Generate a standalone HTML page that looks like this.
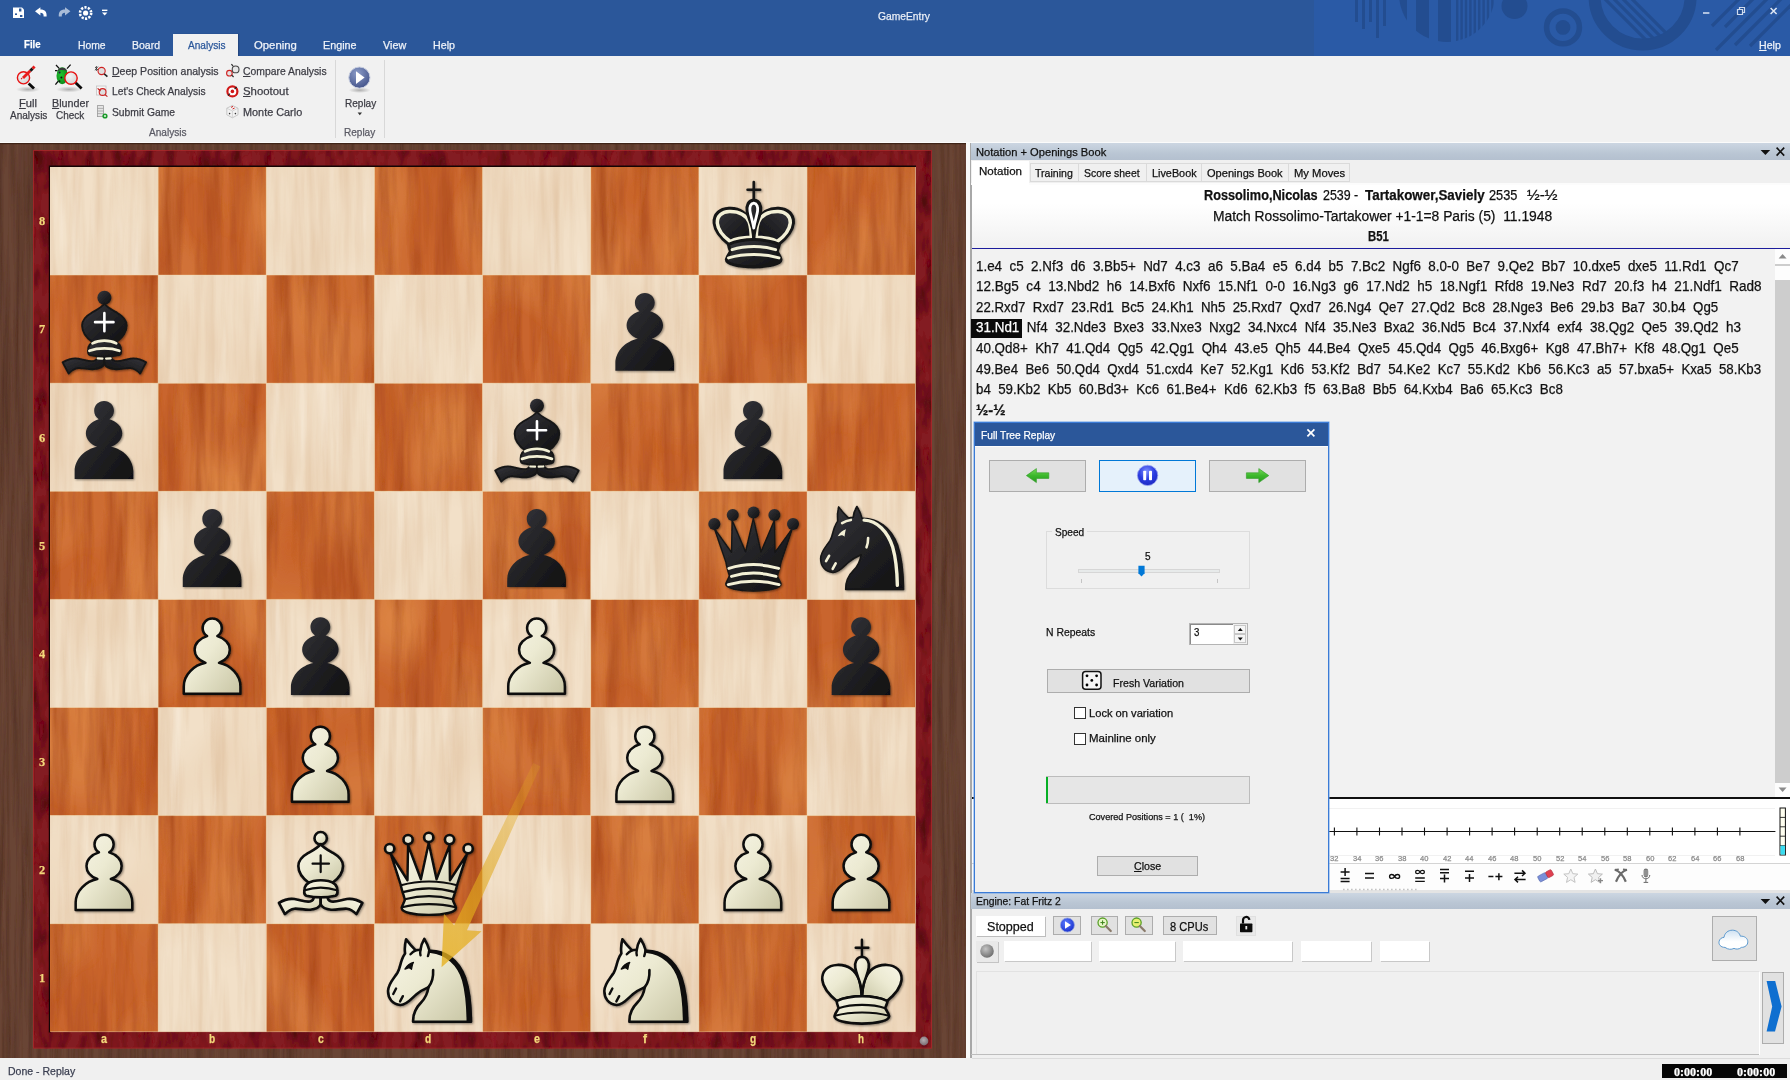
<!DOCTYPE html>
<html><head><meta charset="utf-8"><title>GameEntry</title>
<style>
html,body{margin:0;padding:0;}
body{width:1790px;height:1080px;overflow:hidden;position:relative;background:#f0f0f0;font-family:"Liberation Sans",sans-serif;font-size:11px;color:#000;}
div,span,svg{position:absolute;}
.t{white-space:pre;transform-origin:0 50%;-webkit-text-stroke:.25px currentColor;}
u{text-decoration:underline;text-underline-offset:1px;}

</style></head>
<body>
<svg width="0" height="0" style="left:0;top:0">
<defs>
<linearGradient id="iv" x1="0" y1="0" x2="1" y2="1">
<stop offset="0" stop-color="#f8f6e8"/><stop offset="0.45" stop-color="#ecead2"/><stop offset="1" stop-color="#c8c5a4"/>
</linearGradient>
<linearGradient id="bk" x1="0" y1="0" x2="1" y2="1">
<stop offset="0" stop-color="#38383d"/><stop offset="0.55" stop-color="#202023"/><stop offset="1" stop-color="#101011"/>
</linearGradient>
<filter id="psh" x="-10%" y="-10%" width="125%" height="125%">
<feGaussianBlur in="SourceAlpha" stdDeviation="0.9"/><feOffset dx="1.2" dy="1.2"/>
<feComponentTransfer><feFuncA type="linear" slope="0.45"/></feComponentTransfer>
<feMerge><feMergeNode/><feMergeNode in="SourceGraphic"/></feMerge>
</filter>
<filter id="wdark" x="0" y="0" width="100%" height="100%">
<feTurbulence type="fractalNoise" baseFrequency="0.07 0.006" numOctaves="4" seed="7" result="n"/>
<feColorMatrix in="n" type="matrix" values="0 0 0 0 0  0 0 0 0 0  0 0 0 0 0  1.5 0 0 0 -0.56" result="a"/>
<feFlood flood-color="#a03e16"/><feComposite in2="a" operator="in" result="dk"/>
<feColorMatrix in="n" type="matrix" values="0 0 0 0 0  0 0 0 0 0  0 0 0 0 0  0 -1.3 0 0 0.5" result="a2"/>
<feFlood flood-color="#e08848"/><feComposite in2="a2" operator="in" result="lt"/>
<feTurbulence type="fractalNoise" baseFrequency="0.014 0.008" numOctaves="2" seed="21" result="m"/>
<feColorMatrix in="m" type="matrix" values="0 0 0 0 0  0 0 0 0 0  0 0 0 0 0  1.6 0 0 0 -0.62" result="b"/>
<feFlood flood-color="#e4904c"/><feComposite in2="b" operator="in" result="bl"/>
<feMerge><feMergeNode in="SourceGraphic"/><feMergeNode in="bl"/><feMergeNode in="dk"/><feMergeNode in="lt"/></feMerge>
<feComposite in2="SourceGraphic" operator="in"/>
</filter>
<filter id="wlight" x="0" y="0" width="100%" height="100%">
<feTurbulence type="fractalNoise" baseFrequency="0.09 0.006" numOctaves="4" seed="3" result="n"/>
<feColorMatrix in="n" type="matrix" values="0 0 0 0 0  0 0 0 0 0  0 0 0 0 0  1.3 0 0 0 -0.5" result="a"/>
<feFlood flood-color="#dfc09e"/><feComposite in2="a" operator="in" result="dk"/>
<feColorMatrix in="n" type="matrix" values="0 0 0 0 0  0 0 0 0 0  0 0 0 0 0  0 -1.3 0 0 0.5" result="a2"/>
<feFlood flood-color="#faf0e2"/><feComposite in2="a2" operator="in" result="lt"/>
<feTurbulence type="fractalNoise" baseFrequency="0.012 0.009" numOctaves="2" seed="9" result="m"/>
<feColorMatrix in="m" type="matrix" values="0 0 0 0 0  0 0 0 0 0  0 0 0 0 0  1.2 0 0 0 -0.5" result="b"/>
<feFlood flood-color="#e6c8a6"/><feComposite in2="b" operator="in" result="bl"/>
<feMerge><feMergeNode in="SourceGraphic"/><feMergeNode in="bl"/><feMergeNode in="dk"/><feMergeNode in="lt"/></feMerge>
<feComposite in2="SourceGraphic" operator="in"/>
</filter>
<filter id="wbrown" x="0" y="0" width="100%" height="100%">
<feTurbulence type="fractalNoise" baseFrequency="0.2 0.006" numOctaves="4" seed="11" result="n"/>
<feColorMatrix in="n" type="matrix" values="0 0 0 0 0  0 0 0 0 0  0 0 0 0 0  1.4 0 0 0 -0.5" result="a"/>
<feFlood flood-color="#4a2a20"/><feComposite in2="a" operator="in" result="dk"/>
<feColorMatrix in="n" type="matrix" values="0 0 0 0 0  0 0 0 0 0  0 0 0 0 0  0 -1.4 0 0 0.45" result="a2"/>
<feFlood flood-color="#7c5446"/><feComposite in2="a2" operator="in" result="lt"/>
<feMerge><feMergeNode in="SourceGraphic"/><feMergeNode in="dk"/><feMergeNode in="lt"/></feMerge>
</filter>
<filter id="wred" x="0" y="0" width="100%" height="100%">
<feTurbulence type="fractalNoise" baseFrequency="0.09 0.03" numOctaves="3" seed="5" result="n"/>
<feColorMatrix in="n" type="matrix" values="0 0 0 0 0  0 0 0 0 0  0 0 0 0 0  2 0 0 0 -0.8" result="a"/>
<feFlood flood-color="#4c0a12"/><feComposite in2="a" operator="in" result="dk"/>
<feColorMatrix in="n" type="matrix" values="0 0 0 0 0  0 0 0 0 0  0 0 0 0 0  0 -1.6 0 0 0.5" result="a2"/>
<feFlood flood-color="#a02830"/><feComposite in2="a2" operator="in" result="lt"/>
<feMerge><feMergeNode in="SourceGraphic"/><feMergeNode in="dk"/><feMergeNode in="lt"/></feMerge>
<feComposite in2="SourceGraphic" operator="in"/>
</filter>
</defs>
</svg>

<div style="left:0px;top:0px;width:1790px;height:56px;background:#2b579a;"></div>
<div style="left:1314px;top:0px;width:476px;height:56px;background:#2a5aa6;"></div>
<svg width="476" height="56" viewBox="1314 0 476 56" style="left:1314px;top:0"><rect x="1355" y="0" width="3" height="22" fill="#234d90"/><rect x="1362" y="0" width="3" height="29" fill="#234d90"/><rect x="1369" y="0" width="3" height="22" fill="#234d90"/><rect x="1376" y="0" width="3" height="38" fill="#234d90"/><rect x="1383" y="0" width="3" height="26" fill="#234d90"/><clipPath id="hc"><circle cx="1447" cy="-6" r="48"/></clipPath><g clip-path="url(#hc)" fill="#234d90"><rect x="1399" y="0" width="8" height="60"/><rect x="1416" y="0" width="13" height="60"/><rect x="1438" y="0" width="13" height="60"/><rect x="1456" y="0" width="2.4" height="60"/><rect x="1460.4" y="0" width="2.4" height="60"/><rect x="1464.8000000000002" y="0" width="2.4" height="60"/><rect x="1469.2000000000003" y="0" width="2.4" height="60"/><rect x="1473.6000000000004" y="0" width="2.4" height="60"/><rect x="1478.0000000000005" y="0" width="2.4" height="60"/><rect x="1482.4000000000005" y="0" width="2.4" height="60"/><rect x="1486.8000000000006" y="0" width="2.4" height="60"/><rect x="1491.2000000000007" y="0" width="2.4" height="60"/><rect x="1495.6000000000008" y="0" width="2.4" height="60"/></g><circle cx="1514.5" cy="6" r="13" fill="#234d90"/><circle cx="1563" cy="27.4" r="16.4" fill="none" stroke="#234d90" stroke-width="5.6"/><circle cx="1563" cy="27.4" r="7.4" fill="#234d90"/><circle cx="1642.6" cy="-3.4" r="48" fill="none" stroke="#234d90" stroke-width="12"/><clipPath id="bc"><circle cx="1642.6" cy="-3.4" r="43"/></clipPath><g clip-path="url(#bc)" stroke="#234d90" stroke-width="3.2"><line x1="1586" y1="-20" x2="1656" y2="50"/><line x1="1595" y1="-20" x2="1665" y2="50"/><line x1="1604" y1="-20" x2="1674" y2="50"/><line x1="1613" y1="-20" x2="1683" y2="50"/></g><g stroke="#234d90" stroke-width="3.2"><line x1="1712" y1="26" x2="1740" y2="-2"/><line x1="1716" y1="50" x2="1770" y2="-4"/><line x1="1725" y1="27" x2="1754" y2="-2"/><line x1="1735" y1="45" x2="1784" y2="-4"/><line x1="1750" y1="46" x2="1796" y2="0"/></g></svg>
<svg width="120" height="28" viewBox="0 0 120 28" style="left:0;top:0"><path d="M13,7.5 h9 l2,2 v8.5 h-11 z" fill="#fff"/><rect x="19" y="8.5" width="2.4" height="3" fill="#2b579a"/><rect x="15" y="13.4" width="2" height="1.6" fill="#2b579a"/><rect x="20" y="15" width="2.4" height="2" fill="#2b579a"/><path d="M35,11.2 l5.4,-4 v2.4 c4.6,0 6.6,2.6 6.2,7 h-3 c0.2,-2.6 -0.8,-3.8 -3.2,-3.8 v2.6 z" fill="#fff"/><path d="M70.4,11.2 l-5.4,-4 v2.4 c-4.6,0 -6.6,2.6 -6.2,7 h3 c-0.2,-2.6 0.8,-3.8 3.2,-3.8 v2.6 z" fill="#a9bcd8"/><circle cx="85.6" cy="13" r="5.6" fill="none" stroke="#fff" stroke-width="2.6" stroke-dasharray="2.2 1.3"/><circle cx="85.6" cy="13" r="2.6" fill="#fff"/><rect x="102" y="9.6" width="5.4" height="1.4" fill="#fff"/><path d="M102,12.6 h5.4 l-2.7,3 z" fill="#fff"/></svg>
<span class="t" style="left:877.50px;top:10.53px;font-size:11px;line-height:11px;font-weight:400;color:#e9eef6;transform:scaleX(0.9346);">GameEntry</span>
<svg width="100" height="24" viewBox="1695 0 100 24" style="left:1695px;top:0"><rect x="1703" y="12.2" width="6.4" height="1.6" fill="#cfdbee"/><path d="M1737.5,9.5 h5 v5 h-5 z M1739.5,9.5 v-2 h5 v5 h-2" fill="none" stroke="#cfdbee" stroke-width="1.2"/><path d="M1770.6,8 l6,6 M1776.6,8 l-6,6" stroke="#dfe7f3" stroke-width="1.5" fill="none"/></svg>
<div style="left:173px;top:34px;width:65px;height:23px;background:#f1f1f1;box-shadow:1px 0 1px rgba(20,40,80,.35);"></div>
<span class="t" style="left:23.60px;top:38.93px;font-size:11px;line-height:11px;font-weight:700;color:#fff;transform:scaleX(0.8758);">File</span>
<span class="t" style="left:78.40px;top:39.53px;font-size:11px;line-height:11px;font-weight:400;color:#eef2f8;transform:scaleX(0.9406);">Home</span>
<span class="t" style="left:132.40px;top:39.53px;font-size:11px;line-height:11px;font-weight:400;color:#eef2f8;transform:scaleX(0.9537);">Board</span>
<span class="t" style="left:187.80px;top:39.53px;font-size:11px;line-height:11px;font-weight:400;color:#2b579a;transform:scaleX(0.9178);">Analysis</span>
<span class="t" style="left:253.60px;top:39.53px;font-size:11px;line-height:11px;font-weight:400;color:#eef2f8;transform:scaleX(1.0290);">Opening</span>
<span class="t" style="left:323.40px;top:39.53px;font-size:11px;line-height:11px;font-weight:400;color:#eef2f8;transform:scaleX(0.9806);">Engine</span>
<span class="t" style="left:383.40px;top:39.53px;font-size:11px;line-height:11px;font-weight:400;color:#eef2f8;transform:scaleX(0.9807);">View</span>
<span class="t" style="left:432.60px;top:39.53px;font-size:11px;line-height:11px;font-weight:400;color:#eef2f8;transform:scaleX(0.9724);">Help</span>
<span class="t" style="left:1758.60px;top:39.53px;font-size:11px;line-height:11px;font-weight:400;color:#eef2f8;transform:scaleX(0.9629);"><u>H</u>elp</span>
<div style="left:0px;top:56px;width:1790px;height:85.5px;background:#f1f1f1;"></div>
<div style="left:0px;top:141.5px;width:1790px;height:1.5px;background:#fbfbfb;"></div>
<div style="left:335px;top:60px;width:1px;height:78px;background:#d8d8d8;"></div>
<div style="left:384px;top:60px;width:1px;height:78px;background:#d8d8d8;"></div>
<span class="t" style="left:19.40px;top:97.53px;font-size:11px;line-height:11px;font-weight:400;color:#3c3c44;transform:scaleX(1.0141);"><u>F</u>ull</span>
<span class="t" style="left:9.60px;top:109.53px;font-size:11px;line-height:11px;font-weight:400;color:#3c3c44;transform:scaleX(0.9129);">Analysis</span>
<span class="t" style="left:51.60px;top:97.53px;font-size:11px;line-height:11px;font-weight:400;color:#3c3c44;transform:scaleX(0.9757);"><u>B</u>lunder</span>
<span class="t" style="left:56.40px;top:109.53px;font-size:11px;line-height:11px;font-weight:400;color:#3c3c44;transform:scaleX(0.9042);">Check</span>
<span class="t" style="left:112.00px;top:65.93px;font-size:11px;line-height:11px;font-weight:400;color:#3c3c44;transform:scaleX(0.9578);"><u>D</u>eep Position analysis</span>
<span class="t" style="left:112.00px;top:86.33px;font-size:11px;line-height:11px;font-weight:400;color:#3c3c44;transform:scaleX(0.9309);">Let's Check Analysis</span>
<span class="t" style="left:112.00px;top:106.93px;font-size:11px;line-height:11px;font-weight:400;color:#3c3c44;transform:scaleX(0.9368);">Submit Game</span>
<span class="t" style="left:243.40px;top:65.93px;font-size:11px;line-height:11px;font-weight:400;color:#3c3c44;transform:scaleX(0.9428);"><u>C</u>ompare Analysis</span>
<span class="t" style="left:243.40px;top:86.33px;font-size:11px;line-height:11px;font-weight:400;color:#3c3c44;transform:scaleX(1.0353);"><u>S</u>hootout</span>
<span class="t" style="left:243.40px;top:106.93px;font-size:11px;line-height:11px;font-weight:400;color:#3c3c44;transform:scaleX(0.9880);">Monte Carlo</span>
<span class="t" style="left:149.40px;top:126.53px;font-size:11px;line-height:11px;font-weight:400;color:#5a5a64;transform:scaleX(0.9178);">Analysis</span>
<span class="t" style="left:345.40px;top:97.53px;font-size:11px;line-height:11px;font-weight:400;color:#3c3c44;transform:scaleX(0.9109);">Replay</span>
<span class="t" style="left:344.40px;top:126.53px;font-size:11px;line-height:11px;font-weight:400;color:#5a5a64;transform:scaleX(0.9109);">Replay</span>
<svg width="400" height="86" viewBox="0 56 400 86" style="left:0;top:56px"><defs><radialGradient id="lens" cx=".4" cy=".35" r=".8"><stop offset="0" stop-color="#f4f4f4"/><stop offset="1" stop-color="#cfcfcf"/></radialGradient><radialGradient id="shd" cx=".5" cy=".5" r=".5"><stop offset="0" stop-color="#000" stop-opacity=".28"/><stop offset="1" stop-color="#000" stop-opacity="0"/></radialGradient><radialGradient id="bugg" cx=".4" cy=".45" r=".7"><stop offset="0" stop-color="#1ec82e"/><stop offset="1" stop-color="#0c7a18"/></radialGradient></defs><ellipse cx="28" cy="89.4" rx="12" ry="3" fill="url(#shd)"/><line x1="28.6" y1="83.4" x2="34" y2="88.6" stroke="#0a0a0a" stroke-width="2.8" stroke-linecap="butt"/><circle cx="23.5" cy="77.8" r="6.1" fill="url(#lens)" stroke="#e81010" stroke-width="1.4"/><circle cx="21.6" cy="78.6" r=".8" fill="#e02020"/><g transform="rotate(-45 28.6 72.4)"><rect x="20.6" y="71" width="10.4" height="2.9" fill="#e81c1c"/><rect x="31" y="71" width="3.2" height="2.9" fill="#151515"/><rect x="34.2" y="71" width="2.8" height="2.9" fill="#e81c1c"/></g><ellipse cx="69" cy="89.4" rx="13" ry="3" fill="url(#shd)"/><path d="M56,65 l3.4,3.6 M70.6,64.6 l-3.6,4 M55,70.6 h2.4 M55.4,84.6 l3,-3.6" stroke="#111" stroke-width="1.3" fill="none"/><ellipse cx="62.2" cy="75.8" rx="5.7" ry="8.5" fill="url(#bugg)"/><path d="M57.2,71.4 a5.4,5.4 0 0 1 10,-0.4 c-3,-1.4 -7,-1.400 -10,0.400 z" fill="#3a3a3a"/><circle cx="59.6" cy="72.6" r="1" fill="#30104a"/><circle cx="61.4" cy="77.4" r="1" fill="#111"/><circle cx="59.4" cy="81.2" r="1" fill="#111"/><line x1="75.6" y1="82.800" x2="81.6" y2="88.600" stroke="#0a0a0a" stroke-width="2.800"/><circle cx="71" cy="78.100" r="6.200" fill="url(#lens)" stroke="#e81010" stroke-width="1.400"/><circle cx="101.6" cy="71" r="3.6" fill="#dedede" stroke="#d02020" stroke-width="1.1"/><line x1="104.2" y1="73.8" x2="107.4" y2="76.6" stroke="#222" stroke-width="1.6"/><path d="M95,67 l3,3 M98,66.6 l-3,3.6 M96.4,66 v5" stroke="#333" stroke-width=".8"/><rect x="96.4" y="86" width="9.6" height="9" fill="#f6f6f6" stroke="#c4c4c4" stroke-width=".8"/><circle cx="102.6" cy="92" r="3.4" fill="#dedede" stroke="#d02020" stroke-width="1.1"/><path d="M97.6,88.4 l3,2.6 M105,94.6 l2.4,2" stroke="#c02020" stroke-width="1.2"/><rect x="97.4" y="105.6" width="6" height="11" fill="#e4e4e4" stroke="#9a9a9a" stroke-width=".8"/><path d="M97.4,108.4 h6 M97.4,111 h6 M97.4,113.6 h6" stroke="#9a9a9a" stroke-width=".7"/><circle cx="105" cy="116" r="2.6" fill="#1a9a2a"/><circle cx="105" cy="116" r=".9" fill="#fff"/><circle cx="229.4" cy="73.2" r="2.8" fill="#e2e2e2" stroke="#d02020" stroke-width="1.1"/><circle cx="235.6" cy="69.4" r="3.4" fill="#e6e6e6" stroke="#444" stroke-width="1.1"/><path d="M231.6,75 l2,2 M233,66 l-1.6,-1.8" stroke="#333" stroke-width="1.2"/><circle cx="232.4" cy="91.4" r="5" fill="#fff" stroke="#d01818" stroke-width="2.2"/><circle cx="232.4" cy="91.4" r="1.8" fill="#d01818"/><path d="M228,95.6 l2,-2 M236.6,87 l-2,2" stroke="#222" stroke-width="1.2"/><path d="M232.4,105.4 l5.6,2.8 v6.6 l-5.6,3 l-5.6,-3 v-6.6 z" fill="#f2f2f2" stroke="#bdbdbd" stroke-width=".8"/><path d="M226.8,108.2 l5.6,2.8 l5.6,-2.8 M232.4,111 v6.8" stroke="#c8c8c8" stroke-width=".7" fill="none"/><path d="M231,107.4 l2,-1 M232.6,109 l2,-1" stroke="#d02020" stroke-width="1"/><circle cx="229.6" cy="113.6" r=".8" fill="#333"/><circle cx="235.4" cy="113.6" r=".8" fill="#333"/><ellipse cx="359.6" cy="90.2" rx="11" ry="2.8" fill="url(#shd)"/><defs><radialGradient id="rp" cx=".4" cy=".3" r=".8"><stop offset="0" stop-color="#8c9cc8"/><stop offset="1" stop-color="#3c4c84"/></radialGradient></defs><circle cx="359.4" cy="77.6" r="10.6" fill="url(#rp)" stroke="#c9cfe0" stroke-width="1"/><path d="M356,71.2 l8.6,6.4 l-8.6,6.4 z" fill="#fff"/><path d="M357.6,112.6 h4.4 l-2.2,2.6 z" fill="#333"/></svg>
<svg width="966" height="915" style="left:0;top:143px"><rect width="966" height="915" fill="#694435" filter="url(#wbrown)"/><rect width="966" height="1.2" fill="#3f2418"/></svg>
<svg width="900" height="899" style="left:33px;top:150px"><rect width="899" height="898.6" fill="#831d24" filter="url(#wred)"/><rect x=".5" y=".5" width="898" height="897.6" fill="none" stroke="#b02c2c" stroke-width="1" opacity=".7"/><path d="M16.6,882.6 V16.2 H883" fill="none" stroke="#140404" stroke-width="1.6"/><path d="M18,881.6 H882.4 V17" fill="none" stroke="#f6deaa" stroke-width="1" opacity=".75"/></svg>
<svg width="865.2" height="864.8" viewBox="0 0 864 864" preserveAspectRatio="none" style="left:50.4px;top:167.2px"><rect width="864" height="864" fill="#f2e0c8" filter="url(#wlight)"/><path d="M108,0h108v108h-108zM324,0h108v108h-108zM540,0h108v108h-108zM756,0h108v108h-108zM0,108h108v108h-108zM216,108h108v108h-108zM432,108h108v108h-108zM648,108h108v108h-108zM108,216h108v108h-108zM324,216h108v108h-108zM540,216h108v108h-108zM756,216h108v108h-108zM0,324h108v108h-108zM216,324h108v108h-108zM432,324h108v108h-108zM648,324h108v108h-108zM108,432h108v108h-108zM324,432h108v108h-108zM540,432h108v108h-108zM756,432h108v108h-108zM0,540h108v108h-108zM216,540h108v108h-108zM432,540h108v108h-108zM648,540h108v108h-108zM108,648h108v108h-108zM324,648h108v108h-108zM540,648h108v108h-108zM756,648h108v108h-108zM0,756h108v108h-108zM216,756h108v108h-108zM432,756h108v108h-108zM648,756h108v108h-108z" fill="#c9652f" filter="url(#wdark)"/><path d="M108,0v864M0,108h864M216,0v864M0,216h864M324,0v864M0,324h864M432,0v864M0,432h864M540,0v864M0,540h864M648,0v864M0,648h864M756,0v864M0,756h864" stroke="#f3d9a8" stroke-width=".8" opacity=".55" fill="none"/></svg>
<span class="t" style="left:39.40px;top:214.35px;font-size:13px;line-height:13px;font-weight:700;color:#f3d77a;transform:scaleX(0.9538);font-family:'Liberation Serif',serif;">8</span>
<span class="t" style="left:39.40px;top:322.47px;font-size:13px;line-height:13px;font-weight:700;color:#f3d77a;transform:scaleX(0.9538);font-family:'Liberation Serif',serif;">7</span>
<span class="t" style="left:39.40px;top:430.59px;font-size:13px;line-height:13px;font-weight:700;color:#f3d77a;transform:scaleX(0.9538);font-family:'Liberation Serif',serif;">6</span>
<span class="t" style="left:39.40px;top:538.71px;font-size:13px;line-height:13px;font-weight:700;color:#f3d77a;transform:scaleX(0.9538);font-family:'Liberation Serif',serif;">5</span>
<span class="t" style="left:39.40px;top:646.83px;font-size:13px;line-height:13px;font-weight:700;color:#f3d77a;transform:scaleX(0.9538);font-family:'Liberation Serif',serif;">4</span>
<span class="t" style="left:39.40px;top:754.95px;font-size:13px;line-height:13px;font-weight:700;color:#f3d77a;transform:scaleX(0.9538);font-family:'Liberation Serif',serif;">3</span>
<span class="t" style="left:39.40px;top:863.07px;font-size:13px;line-height:13px;font-weight:700;color:#f3d77a;transform:scaleX(0.9538);font-family:'Liberation Serif',serif;">2</span>
<span class="t" style="left:39.40px;top:971.19px;font-size:13px;line-height:13px;font-weight:700;color:#f3d77a;transform:scaleX(0.9538);font-family:'Liberation Serif',serif;">1</span>
<span class="t" style="left:101.20px;top:1033.29px;font-size:12.5px;line-height:12.5px;font-weight:700;color:#f3d77a;transform:scaleX(0.8629);">a</span>
<span class="t" style="left:209.20px;top:1033.29px;font-size:12.5px;line-height:12.5px;font-weight:700;color:#f3d77a;transform:scaleX(0.8115);">b</span>
<span class="t" style="left:317.50px;top:1033.29px;font-size:12.5px;line-height:12.5px;font-weight:700;color:#f3d77a;transform:scaleX(0.8342);">c</span>
<span class="t" style="left:425.40px;top:1033.29px;font-size:12.5px;line-height:12.5px;font-weight:700;color:#f3d77a;transform:scaleX(0.8115);">d</span>
<span class="t" style="left:533.60px;top:1033.29px;font-size:12.5px;line-height:12.5px;font-weight:700;color:#f3d77a;transform:scaleX(0.8629);">e</span>
<span class="t" style="left:642.70px;top:1033.29px;font-size:12.5px;line-height:12.5px;font-weight:700;color:#f3d77a;transform:scaleX(0.9588);">f</span>
<span class="t" style="left:749.70px;top:1033.29px;font-size:12.5px;line-height:12.5px;font-weight:700;color:#f3d77a;transform:scaleX(0.8115);">g</span>
<span class="t" style="left:857.90px;top:1033.29px;font-size:12.5px;line-height:12.5px;font-weight:700;color:#f3d77a;transform:scaleX(0.7853);">h</span>
<svg width="12" height="12" style="left:918px;top:1035px"><defs><radialGradient id="dg" cx=".45" cy=".4" r=".6"><stop offset="0" stop-color="#b4acb0"/><stop offset="1" stop-color="#7a6c72"/></radialGradient></defs><circle cx="6" cy="6" r="4.4" fill="url(#dg)"/></svg>
<svg width="865.2" height="864.8" viewBox="0 0 864 864" preserveAspectRatio="none" style="left:50.4px;top:167.2px"><g transform="translate(648 0)" filter="url(#psh)"><path d="M54.6,72.4 C44,72.6 36,74 30,77.4 C22,71 16,64 15.2,56 C14.6,47 21,41.6 30,41.2 C40,40.8 48,46 52,56 C53.6,61 54.4,67 54.6,72.4 Z" fill="url(#bk)" stroke="#141414" stroke-width="3" stroke-linejoin="round"/><path d="M52,70.2 C44,70.4 36.6,71.6 31.4,74.4 C24,69 19,62.6 18.4,56 C18,49 23,44.6 30.4,44.4 C39,44.2 46.8,47.4 50.2,55 C51.6,59 52.2,65 52.3,70.2 Z" fill="none" stroke="#f3f0d6" stroke-width="3.5" stroke-linejoin="round"/><g transform="translate(109.6 0) scale(-1 1)"><path d="M54.6,72.4 C44,72.6 36,74 30,77.4 C22,71 16,64 15.2,56 C14.6,47 21,41.6 30,41.2 C40,40.8 48,46 52,56 C53.6,61 54.4,67 54.6,72.4 Z" fill="url(#bk)" stroke="#141414" stroke-width="3" stroke-linejoin="round"/><path d="M52,70.2 C44,70.4 36.6,71.6 31.4,74.4 C24,69 19,62.6 18.4,56 C18,49 23,44.6 30.4,44.4 C39,44.2 46.8,47.4 50.2,55 C51.6,59 52.2,65 52.3,70.2 Z" fill="none" stroke="#f3f0d6" stroke-width="3.5" stroke-linejoin="round"/></g><path d="M54.8,33 C49.4,33.4 47.4,38.4 48.2,44 C49,50 52,55 53.4,61 C54,64.6 54.6,68.6 54.8,72.4 C55,68.6 55.6,64.6 56.4,61 C57.8,55 60.8,50 61.6,44 C62.4,38.4 60.2,33.4 54.8,33 Z" fill="url(#bk)" stroke="#141414" stroke-width="3" stroke-linejoin="round"/><path d="M54.8,36 C51.6,36.4 50.4,40 51,44 C51.6,48.6 53.7,53.6 54.8,61 C55.9,53.6 58,48.6 58.6,44 C59.2,40 58,36.4 54.8,36 Z" fill="none" stroke="#fff" stroke-width="2.8" stroke-linejoin="round"/><path d="M29.6,77.2 C44,71 66,71 80.4,77.2 C80,80 79,82 78,84.4 C79.6,87 81.4,89.4 82,92.4 C82.2,97 70,99.8 54.8,99.8 C39.6,99.8 27.2,97 27.4,92.4 C28,89.4 30,87 31.6,84.4 C30.6,82 29.8,80 29.6,77.2 Z" fill="url(#bk)" stroke="#141414" stroke-width="3" stroke-linejoin="round"/><path d="M33.2,82.6 C46,78.4 64,78.4 76.6,82.6 M29.6,90.8 C45,86.4 65,86.4 80,90.8" fill="none" stroke="#f3f0d6" stroke-width="3" stroke-linecap="round"/><path d="M54.8,15 L54.8,32 M48.6,22.8 L61.2,22.8" fill="none" stroke="#141414" stroke-width="2.6" stroke-linecap="round"/></g><g transform="translate(0 108)" filter="url(#psh)"><path d="M12.6,87.2 C18,84 23,82.6 28,83.4 C34,84.4 39,86.6 43.6,85.8 C46.6,85 47.4,83 47.4,81 L54.3,81.4 L54.3,88.6 C53,91.6 49,93.6 44,94 C38,94.4 33,92.6 28,93 C24.4,93.4 21.6,95.4 18.6,98.4 Z" fill="url(#bk)" stroke="#161616" stroke-width="1.8" stroke-linejoin="round"/><g transform="translate(108.6 0) scale(-1 1)"><path d="M12.6,87.2 C18,84 23,82.6 28,83.4 C34,84.4 39,86.6 43.6,85.8 C46.6,85 47.4,83 47.4,81 L54.3,81.4 L54.3,88.6 C53,91.6 49,93.6 44,94 C38,94.4 33,92.6 28,93 C24.4,93.4 21.6,95.4 18.6,98.4 Z" fill="url(#bk)" stroke="#161616" stroke-width="1.8" stroke-linejoin="round"/></g><circle cx="54.3" cy="22.6" r="7" fill="url(#bk)"/><path d="M54.3,28.4 C52,32 47,34.6 41.6,37.6 C36,40.8 32,45 32,50.4 C32,56.4 35.6,62.4 43,67.6 L65.6,67.6 C73,62.4 76.6,56.4 76.6,50.4 C76.6,45 72.6,40.8 67,37.6 C61.6,34.6 56.6,32 54.3,28.4 Z" fill="url(#bk)" stroke="#161616" stroke-width="1.8" stroke-linejoin="round"/><path d="M38,75 C38,70 42,66.6 47,65.4 C52,64.4 57,64.4 62,65.4 C67,66.6 71,70 71,75 C71.4,77.6 70.6,79.4 69,80 C60,82 49,82 40,80 C38.4,79.4 37.6,77.6 38,75 Z" fill="url(#bk)" stroke="#161616" stroke-width="1.8" stroke-linejoin="round"/><path d="M42.4,68.2 C49,64.6 59.6,64.6 66.2,68.2" fill="none" stroke="#f3f0d6" stroke-width="2.6" stroke-linecap="round"/><path d="M39.4,75.6 C48,72.4 60.6,72.4 69.2,75.6" fill="none" stroke="#f3f0d6" stroke-width="2.8" stroke-linecap="round"/><path d="M47.6,83.2 L52.4,83.4 M56,83.4 L60.6,83.2" fill="none" stroke="#f3f0d6" stroke-width="2.2" stroke-linecap="round"/><path d="M54.3,38 L54.3,56 M45,47 L63.4,47" fill="none" stroke="#fff" stroke-width="2.6" stroke-linecap="round"/></g><g transform="translate(540 108)" filter="url(#psh)"><path d="M54,17.8 C59.6,17.8 63.9,22.1 63.9,27.6 C63.9,31.2 62.1,34.2 59.3,36 C66.8,38.2 72.2,43.6 72.2,50 C72.2,56 67.6,61 61,63.6 C73,66 83.2,76 83.2,88 L83.2,95.6 L24.6,95.6 L24.6,88 C24.6,76 35,66 47,63.6 C40.4,61 35.8,56 35.8,50 C35.8,43.6 41.2,38.2 48.7,36 C45.9,34.2 44.1,31.2 44.1,27.6 C44.1,22.1 48.4,17.8 54,17.8 Z" fill="url(#bk)"/></g><g transform="translate(0 216)" filter="url(#psh)"><path d="M54,17.8 C59.6,17.8 63.9,22.1 63.9,27.6 C63.9,31.2 62.1,34.2 59.3,36 C66.8,38.2 72.2,43.6 72.2,50 C72.2,56 67.6,61 61,63.6 C73,66 83.2,76 83.2,88 L83.2,95.6 L24.6,95.6 L24.6,88 C24.6,76 35,66 47,63.6 C40.4,61 35.8,56 35.8,50 C35.8,43.6 41.2,38.2 48.7,36 C45.9,34.2 44.1,31.2 44.1,27.6 C44.1,22.1 48.4,17.8 54,17.8 Z" fill="url(#bk)"/></g><g transform="translate(432 216)" filter="url(#psh)"><path d="M12.6,87.2 C18,84 23,82.6 28,83.4 C34,84.4 39,86.6 43.6,85.8 C46.6,85 47.4,83 47.4,81 L54.3,81.4 L54.3,88.6 C53,91.6 49,93.6 44,94 C38,94.4 33,92.6 28,93 C24.4,93.4 21.6,95.4 18.6,98.4 Z" fill="url(#bk)" stroke="#161616" stroke-width="1.8" stroke-linejoin="round"/><g transform="translate(108.6 0) scale(-1 1)"><path d="M12.6,87.2 C18,84 23,82.6 28,83.4 C34,84.4 39,86.6 43.6,85.8 C46.6,85 47.4,83 47.4,81 L54.3,81.4 L54.3,88.6 C53,91.6 49,93.6 44,94 C38,94.4 33,92.6 28,93 C24.4,93.4 21.6,95.4 18.6,98.4 Z" fill="url(#bk)" stroke="#161616" stroke-width="1.8" stroke-linejoin="round"/></g><circle cx="54.3" cy="22.6" r="7" fill="url(#bk)"/><path d="M54.3,28.4 C52,32 47,34.6 41.6,37.6 C36,40.8 32,45 32,50.4 C32,56.4 35.6,62.4 43,67.6 L65.6,67.6 C73,62.4 76.6,56.4 76.6,50.4 C76.6,45 72.6,40.8 67,37.6 C61.6,34.6 56.6,32 54.3,28.4 Z" fill="url(#bk)" stroke="#161616" stroke-width="1.8" stroke-linejoin="round"/><path d="M38,75 C38,70 42,66.6 47,65.4 C52,64.4 57,64.4 62,65.4 C67,66.6 71,70 71,75 C71.4,77.6 70.6,79.4 69,80 C60,82 49,82 40,80 C38.4,79.4 37.6,77.6 38,75 Z" fill="url(#bk)" stroke="#161616" stroke-width="1.8" stroke-linejoin="round"/><path d="M42.4,68.2 C49,64.6 59.6,64.6 66.2,68.2" fill="none" stroke="#f3f0d6" stroke-width="2.6" stroke-linecap="round"/><path d="M39.4,75.6 C48,72.4 60.6,72.4 69.2,75.6" fill="none" stroke="#f3f0d6" stroke-width="2.8" stroke-linecap="round"/><path d="M47.6,83.2 L52.4,83.4 M56,83.4 L60.6,83.2" fill="none" stroke="#f3f0d6" stroke-width="2.2" stroke-linecap="round"/><path d="M54.3,38 L54.3,56 M45,47 L63.4,47" fill="none" stroke="#fff" stroke-width="2.6" stroke-linecap="round"/></g><g transform="translate(648 216)" filter="url(#psh)"><path d="M54,17.8 C59.6,17.8 63.9,22.1 63.9,27.6 C63.9,31.2 62.1,34.2 59.3,36 C66.8,38.2 72.2,43.6 72.2,50 C72.2,56 67.6,61 61,63.6 C73,66 83.2,76 83.2,88 L83.2,95.6 L24.6,95.6 L24.6,88 C24.6,76 35,66 47,63.6 C40.4,61 35.8,56 35.8,50 C35.8,43.6 41.2,38.2 48.7,36 C45.9,34.2 44.1,31.2 44.1,27.6 C44.1,22.1 48.4,17.8 54,17.8 Z" fill="url(#bk)"/></g><g transform="translate(108 324)" filter="url(#psh)"><path d="M54,17.8 C59.6,17.8 63.9,22.1 63.9,27.6 C63.9,31.2 62.1,34.2 59.3,36 C66.8,38.2 72.2,43.6 72.2,50 C72.2,56 67.6,61 61,63.6 C73,66 83.2,76 83.2,88 L83.2,95.6 L24.6,95.6 L24.6,88 C24.6,76 35,66 47,63.6 C40.4,61 35.8,56 35.8,50 C35.8,43.6 41.2,38.2 48.7,36 C45.9,34.2 44.1,31.2 44.1,27.6 C44.1,22.1 48.4,17.8 54,17.8 Z" fill="url(#bk)"/></g><g transform="translate(432 324)" filter="url(#psh)"><path d="M54,17.8 C59.6,17.8 63.9,22.1 63.9,27.6 C63.9,31.2 62.1,34.2 59.3,36 C66.8,38.2 72.2,43.6 72.2,50 C72.2,56 67.6,61 61,63.6 C73,66 83.2,76 83.2,88 L83.2,95.6 L24.6,95.6 L24.6,88 C24.6,76 35,66 47,63.6 C40.4,61 35.8,56 35.8,50 C35.8,43.6 41.2,38.2 48.7,36 C45.9,34.2 44.1,31.2 44.1,27.6 C44.1,22.1 48.4,17.8 54,17.8 Z" fill="url(#bk)"/></g><g transform="translate(648 324)" filter="url(#psh)"><path d="M27,71 L15.4,37 L32.6,61 L33.2,29 L46.6,60.4 L54.4,27 L62,60.4 L75.4,29 L76,61 L93.4,37 L82,71 C81.4,75 79.8,80 78.4,84.4 C79.4,87.4 81,89.4 82,92.6 C82,97 70,99.6 54.4,99.6 C38.6,99.6 26.6,97 26.8,92.6 C27.8,89.4 29.4,87.4 30.4,84.4 C29,80 27.6,75 27,71 Z" fill="url(#bk)" stroke="#161616" stroke-width="1.4" stroke-linejoin="round"/><circle cx="15.4" cy="32.6" r="6" fill="url(#bk)"/><circle cx="33.8" cy="23.6" r="6" fill="url(#bk)"/><circle cx="54.6" cy="21.2" r="6" fill="url(#bk)"/><circle cx="75.4" cy="23.6" r="6" fill="url(#bk)"/><circle cx="94" cy="32.6" r="6" fill="url(#bk)"/><path d="M30,77 C46,72 63,72 79.6,77 M32.6,85 C47,80.6 62,80.6 77,85 M29.4,93.2 C45,89 64,89 80,93.2" fill="none" stroke="#f3f0d6" stroke-width="3" stroke-linecap="round"/></g><g transform="translate(756 324)" filter="url(#psh)"><path d="M31.6,15.6 C34,19 38,23.5 41.2,26.6 C43,26.2 44.6,26 46,26 C46.4,22.4 47.8,18.6 49.8,15.2 C52,18.8 54,23 55,27 C70,26.6 84,36 90.5,54 C94.6,66 96.2,82 96.4,98 L38.6,98 C38.4,90 41.4,84 46.4,79 C50.4,75 53,70 54,63.4 C49.6,65.4 45.4,67.6 42,70.4 C37,74.6 32.6,81 26,81.2 C18,80.6 13.4,74.6 13.6,67 C13.8,60 19.2,55 23,49 C25.4,45 25.6,40.4 27.6,35.6 C28.4,33.4 29.4,31.4 30.6,29.8 C30,25.2 30.4,20.2 31.6,15.6 Z" fill="url(#bk)" stroke="#161616" stroke-width="1.6" stroke-linejoin="round"/><path d="M57,28.8 C70,29.4 80.6,40 85.6,56 C89,68 90,82 90.2,94" fill="none" stroke="#f3f0d6" stroke-width="3.4" stroke-linecap="round"/><path d="M35,31.8 C37.8,30 40.8,29 43.8,28.6" fill="none" stroke="#f3f0d6" stroke-width="2.6" stroke-linecap="round"/><path d="M61,46.6 C61,50 60.4,53.6 59.4,56" fill="none" stroke="#f3f0d6" stroke-width="2.6" stroke-linecap="round"/><path d="M30.6,45 C32.6,41.4 35.6,39 39,38 C38,40 38,42.6 37.4,45.4 C36.2,44 34.6,43.4 33,44.4 Z" fill="#f3f0d6"/><path d="M22,64.4 L19,69.8 M28.6,72 L25.6,77.6" fill="none" stroke="#f3f0d6" stroke-width="2.6" stroke-linecap="round"/></g><g transform="translate(108 432)" filter="url(#psh)"><path d="M54,17.8 C59.6,17.8 63.9,22.1 63.9,27.6 C63.9,31.2 62.1,34.2 59.3,36 C66.8,38.2 72.2,43.6 72.2,50 C72.2,56 67.6,61 61,63.6 C73,66 83.2,76 83.2,88 L83.2,95.6 L24.6,95.6 L24.6,88 C24.6,76 35,66 47,63.6 C40.4,61 35.8,56 35.8,50 C35.8,43.6 41.2,38.2 48.7,36 C45.9,34.2 44.1,31.2 44.1,27.6 C44.1,22.1 48.4,17.8 54,17.8 Z" fill="url(#iv)" stroke="#0c0c0c" stroke-width="2.6" stroke-linejoin="round" transform="translate(54 56.7) scale(0.965) translate(-54 -56.7)"/></g><g transform="translate(216 432)" filter="url(#psh)"><path d="M54,17.8 C59.6,17.8 63.9,22.1 63.9,27.6 C63.9,31.2 62.1,34.2 59.3,36 C66.8,38.2 72.2,43.6 72.2,50 C72.2,56 67.6,61 61,63.6 C73,66 83.2,76 83.2,88 L83.2,95.6 L24.6,95.6 L24.6,88 C24.6,76 35,66 47,63.6 C40.4,61 35.8,56 35.8,50 C35.8,43.6 41.2,38.2 48.7,36 C45.9,34.2 44.1,31.2 44.1,27.6 C44.1,22.1 48.4,17.8 54,17.8 Z" fill="url(#bk)"/></g><g transform="translate(432 432)" filter="url(#psh)"><path d="M54,17.8 C59.6,17.8 63.9,22.1 63.9,27.6 C63.9,31.2 62.1,34.2 59.3,36 C66.8,38.2 72.2,43.6 72.2,50 C72.2,56 67.6,61 61,63.6 C73,66 83.2,76 83.2,88 L83.2,95.6 L24.6,95.6 L24.6,88 C24.6,76 35,66 47,63.6 C40.4,61 35.8,56 35.8,50 C35.8,43.6 41.2,38.2 48.7,36 C45.9,34.2 44.1,31.2 44.1,27.6 C44.1,22.1 48.4,17.8 54,17.8 Z" fill="url(#iv)" stroke="#0c0c0c" stroke-width="2.6" stroke-linejoin="round" transform="translate(54 56.7) scale(0.965) translate(-54 -56.7)"/></g><g transform="translate(756 432)" filter="url(#psh)"><path d="M54,17.8 C59.6,17.8 63.9,22.1 63.9,27.6 C63.9,31.2 62.1,34.2 59.3,36 C66.8,38.2 72.2,43.6 72.2,50 C72.2,56 67.6,61 61,63.6 C73,66 83.2,76 83.2,88 L83.2,95.6 L24.6,95.6 L24.6,88 C24.6,76 35,66 47,63.6 C40.4,61 35.8,56 35.8,50 C35.8,43.6 41.2,38.2 48.7,36 C45.9,34.2 44.1,31.2 44.1,27.6 C44.1,22.1 48.4,17.8 54,17.8 Z" fill="url(#bk)"/></g><g transform="translate(216 540)" filter="url(#psh)"><path d="M54,17.8 C59.6,17.8 63.9,22.1 63.9,27.6 C63.9,31.2 62.1,34.2 59.3,36 C66.8,38.2 72.2,43.6 72.2,50 C72.2,56 67.6,61 61,63.6 C73,66 83.2,76 83.2,88 L83.2,95.6 L24.6,95.6 L24.6,88 C24.6,76 35,66 47,63.6 C40.4,61 35.8,56 35.8,50 C35.8,43.6 41.2,38.2 48.7,36 C45.9,34.2 44.1,31.2 44.1,27.6 C44.1,22.1 48.4,17.8 54,17.8 Z" fill="url(#iv)" stroke="#0c0c0c" stroke-width="2.6" stroke-linejoin="round" transform="translate(54 56.7) scale(0.965) translate(-54 -56.7)"/></g><g transform="translate(540 540)" filter="url(#psh)"><path d="M54,17.8 C59.6,17.8 63.9,22.1 63.9,27.6 C63.9,31.2 62.1,34.2 59.3,36 C66.8,38.2 72.2,43.6 72.2,50 C72.2,56 67.6,61 61,63.6 C73,66 83.2,76 83.2,88 L83.2,95.6 L24.6,95.6 L24.6,88 C24.6,76 35,66 47,63.6 C40.4,61 35.8,56 35.8,50 C35.8,43.6 41.2,38.2 48.7,36 C45.9,34.2 44.1,31.2 44.1,27.6 C44.1,22.1 48.4,17.8 54,17.8 Z" fill="url(#iv)" stroke="#0c0c0c" stroke-width="2.6" stroke-linejoin="round" transform="translate(54 56.7) scale(0.965) translate(-54 -56.7)"/></g><g transform="translate(0 648)" filter="url(#psh)"><path d="M54,17.8 C59.6,17.8 63.9,22.1 63.9,27.6 C63.9,31.2 62.1,34.2 59.3,36 C66.8,38.2 72.2,43.6 72.2,50 C72.2,56 67.6,61 61,63.6 C73,66 83.2,76 83.2,88 L83.2,95.6 L24.6,95.6 L24.6,88 C24.6,76 35,66 47,63.6 C40.4,61 35.8,56 35.8,50 C35.8,43.6 41.2,38.2 48.7,36 C45.9,34.2 44.1,31.2 44.1,27.6 C44.1,22.1 48.4,17.8 54,17.8 Z" fill="url(#iv)" stroke="#0c0c0c" stroke-width="2.6" stroke-linejoin="round" transform="translate(54 56.7) scale(0.965) translate(-54 -56.7)"/></g><g transform="translate(216 648)" filter="url(#psh)"><path d="M12.6,87.2 C18,84 23,82.6 28,83.4 C34,84.4 39,86.6 43.6,85.8 C46.6,85 47.4,83 47.4,81 L54.3,81.4 L54.3,88.6 C53,91.6 49,93.6 44,94 C38,94.4 33,92.6 28,93 C24.4,93.4 21.6,95.4 18.6,98.4 Z" fill="url(#iv)" stroke="#0c0c0c" stroke-width="2.6" stroke-linejoin="round"/><g transform="translate(108.6 0) scale(-1 1)"><path d="M12.6,87.2 C18,84 23,82.6 28,83.4 C34,84.4 39,86.6 43.6,85.8 C46.6,85 47.4,83 47.4,81 L54.3,81.4 L54.3,88.6 C53,91.6 49,93.6 44,94 C38,94.4 33,92.6 28,93 C24.4,93.4 21.6,95.4 18.6,98.4 Z" fill="url(#iv)" stroke="#0c0c0c" stroke-width="2.6" stroke-linejoin="round"/></g><circle cx="54.3" cy="22.6" r="6.2" fill="url(#iv)" stroke="#0c0c0c" stroke-width="2.6"/><path d="M54.3,28.4 C52,32 47,34.6 41.6,37.6 C36,40.8 32,45 32,50.4 C32,56.4 35.6,62.4 43,67.6 L65.6,67.6 C73,62.4 76.6,56.4 76.6,50.4 C76.6,45 72.6,40.8 67,37.6 C61.6,34.6 56.6,32 54.3,28.4 Z" fill="url(#iv)" stroke="#0c0c0c" stroke-width="2.6" stroke-linejoin="round"/><path d="M38,75 C38,70 42,66.6 47,65.4 C52,64.4 57,64.4 62,65.4 C67,66.6 71,70 71,75 C71.4,77.6 70.6,79.4 69,80 C60,82 49,82 40,80 C38.4,79.4 37.6,77.6 38,75 Z" fill="url(#iv)" stroke="#0c0c0c" stroke-width="2.6" stroke-linejoin="round"/><path d="M38.4,74.6 C48,71.4 60.6,71.4 70.6,74.6" fill="none" stroke="#0c0c0c" stroke-width="2.2"/><path d="M54.3,39.6 L54.3,56.4 M46.2,48 L62.6,48" fill="none" stroke="#0c0c0c" stroke-width="2.2" stroke-linecap="round"/></g><g transform="translate(324 648)" filter="url(#psh)"><path d="M26.2,69 L16.4,38.6 L33,64.6 L33.6,29.6 L46.4,63.6 L54.2,27.4 L62,63.6 L75,29.6 L75.4,64.6 L92.4,38.6 L82.6,69 C81.6,74 79.6,79 78.2,84 C79,87 80.4,89 81.4,92 C81.6,96.6 70,99.2 54.4,99.2 C38.6,99.2 27,96.6 27.2,92 C28.2,89 29.6,87 30.4,84 C29,79 27.2,74 26.2,69 Z" fill="url(#iv)" stroke="#0c0c0c" stroke-width="2.4" stroke-linejoin="round"/><path d="M26.6,69.6 C44,64.6 65,64.6 82.4,69.6 M28.4,76.4 C45,71.6 64,71.6 80.6,76.4 M30.2,83.6 C46,79.4 63,79.4 78.4,83.6 M27.6,91.6 C44,87.4 65,87.4 81,91.6" fill="none" stroke="#0c0c0c" stroke-width="2.2"/><circle cx="15.2" cy="33" r="4.6" fill="#e6e4d0" stroke="#0c0c0c" stroke-width="2.6"/><circle cx="33.6" cy="24" r="4.6" fill="#e6e4d0" stroke="#0c0c0c" stroke-width="2.6"/><circle cx="54.2" cy="21.8" r="4.6" fill="#e6e4d0" stroke="#0c0c0c" stroke-width="2.6"/><circle cx="75" cy="24" r="4.6" fill="#e6e4d0" stroke="#0c0c0c" stroke-width="2.6"/><circle cx="93.6" cy="33" r="4.6" fill="#e6e4d0" stroke="#0c0c0c" stroke-width="2.6"/></g><g transform="translate(648 648)" filter="url(#psh)"><path d="M54,17.8 C59.6,17.8 63.9,22.1 63.9,27.6 C63.9,31.2 62.1,34.2 59.3,36 C66.8,38.2 72.2,43.6 72.2,50 C72.2,56 67.6,61 61,63.6 C73,66 83.2,76 83.2,88 L83.2,95.6 L24.6,95.6 L24.6,88 C24.6,76 35,66 47,63.6 C40.4,61 35.8,56 35.8,50 C35.8,43.6 41.2,38.2 48.7,36 C45.9,34.2 44.1,31.2 44.1,27.6 C44.1,22.1 48.4,17.8 54,17.8 Z" fill="url(#iv)" stroke="#0c0c0c" stroke-width="2.6" stroke-linejoin="round" transform="translate(54 56.7) scale(0.965) translate(-54 -56.7)"/></g><g transform="translate(756 648)" filter="url(#psh)"><path d="M54,17.8 C59.6,17.8 63.9,22.1 63.9,27.6 C63.9,31.2 62.1,34.2 59.3,36 C66.8,38.2 72.2,43.6 72.2,50 C72.2,56 67.6,61 61,63.6 C73,66 83.2,76 83.2,88 L83.2,95.6 L24.6,95.6 L24.6,88 C24.6,76 35,66 47,63.6 C40.4,61 35.8,56 35.8,50 C35.8,43.6 41.2,38.2 48.7,36 C45.9,34.2 44.1,31.2 44.1,27.6 C44.1,22.1 48.4,17.8 54,17.8 Z" fill="url(#iv)" stroke="#0c0c0c" stroke-width="2.6" stroke-linejoin="round" transform="translate(54 56.7) scale(0.965) translate(-54 -56.7)"/></g><g transform="translate(540 756)" filter="url(#psh)"><path d="M31.6,15.6 C34,19 38,23.5 41.2,26.6 C43,26.2 44.6,26 46,26 C46.4,22.4 47.8,18.6 49.8,15.2 C52,18.8 54,23 55,27 C70,26.6 84,36 90.5,54 C94.6,66 96.2,82 96.4,98 L38.6,98 C38.4,90 41.4,84 46.4,79 C50.4,75 53,70 54,63.4 C49.6,65.4 45.4,67.6 42,70.4 C37,74.6 32.6,81 26,81.2 C18,80.6 13.4,74.6 13.6,67 C13.8,60 19.2,55 23,49 C25.4,45 25.6,40.4 27.6,35.6 C28.4,33.4 29.4,31.4 30.6,29.8 C30,25.2 30.4,20.2 31.6,15.6 Z" fill="url(#iv)" stroke="#0c0c0c" stroke-width="2.6" stroke-linejoin="round"/><path d="M55,27 C70,26.6 84,36 90.5,54 C94.6,66 96.2,82 96.4,98 L92.8,98 C92.6,83 91.4,68 88.2,56.6 C83.6,41 72,30.4 56,28.6 Z" fill="#0c0c0c" stroke="#0c0c0c" stroke-width="1.6" stroke-linejoin="round"/><path d="M58.6,46.4 C58.9,52 58,58.4 54,63.4" fill="none" stroke="#0c0c0c" stroke-width="2.6" stroke-linecap="round"/><path d="M36,30.6 C37.6,28.8 39.2,27.6 41.2,26.6" fill="none" stroke="#0c0c0c" stroke-width="2.4" stroke-linecap="round"/><path d="M46,26 C45.6,28 45.6,30 46,31.6 M54.6,27 C54.4,29 54,31 53.4,32.4" fill="none" stroke="#0c0c0c" stroke-width="2.4" stroke-linecap="round"/><path d="M30.4,45.4 C32.6,41.6 35.6,39.4 39,38.6 C37.6,40.4 37.8,42.6 37,45.6 C36,44.4 34.4,43.6 32.8,44.6 Z" fill="#0c0c0c" stroke="#0c0c0c" stroke-width="1.2" stroke-linejoin="round"/><path d="M21.6,64.8 L18.8,70.2 M28.4,72.4 L25.6,77.6" fill="none" stroke="#0c0c0c" stroke-width="2.4" stroke-linecap="round"/></g><g transform="translate(756 756)" filter="url(#psh)"><path d="M54.6,72.4 C44,72.6 36,74 30,77.4 C22,71 16,64 15.2,56 C14.6,47 21,41.6 30,41.2 C40,40.8 48,46 52,56 C53.6,61 54.4,67 54.6,72.4 Z" fill="url(#iv)" stroke="#0c0c0c" stroke-width="2.6" stroke-linejoin="round"/><g transform="translate(109.6 0) scale(-1 1)"><path d="M54.6,72.4 C44,72.6 36,74 30,77.4 C22,71 16,64 15.2,56 C14.6,47 21,41.6 30,41.2 C40,40.8 48,46 52,56 C53.6,61 54.4,67 54.6,72.4 Z" fill="url(#iv)" stroke="#0c0c0c" stroke-width="2.6" stroke-linejoin="round"/></g><path d="M54.8,33 C49.4,33.4 47.4,38.4 48.2,44 C49,50 52,55 53.4,61 C54,64.6 54.6,68.6 54.8,72.4 C55,68.6 55.6,64.6 56.4,61 C57.8,55 60.8,50 61.6,44 C62.4,38.4 60.2,33.4 54.8,33 Z" fill="url(#iv)" stroke="#0c0c0c" stroke-width="2.6" stroke-linejoin="round"/><path d="M29.6,77.2 C44,71 66,71 80.4,77.2 C80,80 79,82 78,84.4 C79.6,87 81.4,89.4 82,92.4 C82.2,97 70,99.8 54.8,99.8 C39.6,99.8 27.2,97 27.4,92.4 C28,89.4 30,87 31.6,84.4 C30.6,82 29.8,80 29.6,77.2 Z" fill="url(#iv)" stroke="#0c0c0c" stroke-width="2.6" stroke-linejoin="round"/><path d="M31.4,84.4 C45,80 65,80 78.2,84.4 M27.8,92 C44,87.6 66,87.6 81.8,92" fill="none" stroke="#0c0c0c" stroke-width="2.2"/><path d="M54.8,16 L54.8,33 M48.6,24 L61.2,24" fill="none" stroke="#0c0c0c" stroke-width="2.4" stroke-linecap="round"/></g><g transform="translate(324 756)" filter="url(#psh)"><path d="M31.6,15.6 C34,19 38,23.5 41.2,26.6 C43,26.2 44.6,26 46,26 C46.4,22.4 47.8,18.6 49.8,15.2 C52,18.8 54,23 55,27 C70,26.6 84,36 90.5,54 C94.6,66 96.2,82 96.4,98 L38.6,98 C38.4,90 41.4,84 46.4,79 C50.4,75 53,70 54,63.4 C49.6,65.4 45.4,67.6 42,70.4 C37,74.6 32.6,81 26,81.2 C18,80.6 13.4,74.6 13.6,67 C13.8,60 19.2,55 23,49 C25.4,45 25.6,40.4 27.6,35.6 C28.4,33.4 29.4,31.4 30.6,29.8 C30,25.2 30.4,20.2 31.6,15.6 Z" fill="url(#iv)" stroke="#0c0c0c" stroke-width="2.6" stroke-linejoin="round"/><path d="M55,27 C70,26.6 84,36 90.5,54 C94.6,66 96.2,82 96.4,98 L92.8,98 C92.6,83 91.4,68 88.2,56.6 C83.6,41 72,30.4 56,28.6 Z" fill="#0c0c0c" stroke="#0c0c0c" stroke-width="1.6" stroke-linejoin="round"/><path d="M58.6,46.4 C58.9,52 58,58.4 54,63.4" fill="none" stroke="#0c0c0c" stroke-width="2.6" stroke-linecap="round"/><path d="M36,30.6 C37.6,28.8 39.2,27.6 41.2,26.6" fill="none" stroke="#0c0c0c" stroke-width="2.4" stroke-linecap="round"/><path d="M46,26 C45.6,28 45.6,30 46,31.6 M54.6,27 C54.4,29 54,31 53.4,32.4" fill="none" stroke="#0c0c0c" stroke-width="2.4" stroke-linecap="round"/><path d="M30.4,45.4 C32.6,41.6 35.6,39.4 39,38.6 C37.6,40.4 37.8,42.6 37,45.6 C36,44.4 34.4,43.6 32.8,44.6 Z" fill="#0c0c0c" stroke="#0c0c0c" stroke-width="1.2" stroke-linejoin="round"/><path d="M21.6,64.8 L18.8,70.2 M28.4,72.4 L25.6,77.6" fill="none" stroke="#0c0c0c" stroke-width="2.4" stroke-linecap="round"/></g><defs><linearGradient id="ag" gradientUnits="userSpaceOnUse" x1="486" y1="594" x2="392" y2="798"><stop offset="0" stop-color="#e0a81c" stop-opacity=".2"/><stop offset=".5" stop-color="#e0a81c" stop-opacity=".56"/><stop offset="1" stop-color="#e6b01e" stop-opacity=".8"/></linearGradient></defs><path d="M482.6,595.4 L489.6,598.6 L416.4,762.6 L431,763.6 L391,799.4 L393.4,746 L403.6,757.6 Z" fill="url(#ag)"/></svg>
<div style="left:966px;top:143px;width:5px;height:915.6px;background:#f8f8f8;"></div>
<div style="left:970.2px;top:143px;width:1.8px;height:915.6px;background:#a8a8a8;"></div>
<div style="left:971px;top:143px;width:819px;height:17px;background:linear-gradient(#ccd6e2,#bac6d4 60%,#b4c0cf);"></div>
<span class="t" style="left:975.60px;top:147.13px;font-size:11px;line-height:11px;font-weight:400;color:#111;transform:scaleX(1.0114);">Notation + Openings Book</span>
<svg width="32" height="12" style="left:1758px;top:146px"><path d="M2.6,4 h9.6 l-4.8,5 z" fill="#111"/><path d="M18.6,1.6 l7.6,8 M26.2,1.6 l-7.6,8" stroke="#111" stroke-width="1.6"/></svg>
<div style="left:971px;top:160px;width:819px;height:24px;background:#f0f0f0;"></div>
<div style="left:971px;top:183.4px;width:819px;height:2px;background:#fcfcfc;"></div>
<div style="left:972px;top:161.4px;width:57.4px;height:24px;background:#fff;"></div>
<div style="left:1029.6px;top:163.4px;width:49.200000000000045px;height:19px;background:#f0f0f0;border:1px solid #dadada;box-sizing:border-box;"></div>
<div style="left:1077.8px;top:163.4px;width:68.79999999999995px;height:19px;background:#f0f0f0;border:1px solid #dadada;box-sizing:border-box;"></div>
<div style="left:1145.6px;top:163.4px;width:56.80000000000018px;height:19px;background:#f0f0f0;border:1px solid #dadada;box-sizing:border-box;"></div>
<div style="left:1201.4px;top:163.4px;width:87.59999999999991px;height:19px;background:#f0f0f0;border:1px solid #dadada;box-sizing:border-box;"></div>
<div style="left:1288px;top:163.4px;width:61.799999999999955px;height:19px;background:#f0f0f0;border:1px solid #dadada;box-sizing:border-box;"></div>
<span class="t" style="left:979.40px;top:166.33px;font-size:11px;line-height:11px;font-weight:400;color:#111;transform:scaleX(1.0492);">Notation</span>
<span class="t" style="left:1034.80px;top:168.33px;font-size:11px;line-height:11px;font-weight:400;color:#111;transform:scaleX(0.9608);">Training</span>
<span class="t" style="left:1084.40px;top:168.33px;font-size:11px;line-height:11px;font-weight:400;color:#111;transform:scaleX(0.9471);">Score sheet</span>
<span class="t" style="left:1151.60px;top:168.33px;font-size:11px;line-height:11px;font-weight:400;color:#111;transform:scaleX(0.9853);">LiveBook</span>
<span class="t" style="left:1207.40px;top:168.33px;font-size:11px;line-height:11px;font-weight:400;color:#111;transform:scaleX(1.0051);">Openings Book</span>
<span class="t" style="left:1294.00px;top:168.33px;font-size:11px;line-height:11px;font-weight:400;color:#111;transform:scaleX(1.0214);">My Moves</span>
<div style="left:972px;top:185.4px;width:818px;height:62px;background:linear-gradient(#ffffff 30%,#f1f1f1);"></div>
<div style="left:972px;top:247.6px;width:818px;height:1.6px;background:#1c1c9c;"></div>
<span class="t" style="left:1204.40px;top:187.86px;font-size:14px;line-height:14px;font-weight:700;color:#111;transform:scaleX(0.9069);">Rossolimo,Nicolas</span>
<span class="t" style="left:1322.60px;top:187.86px;font-size:14px;line-height:14px;font-weight:400;color:#111;transform:scaleX(0.8866);">2539 -</span>
<span class="t" style="left:1365.20px;top:187.86px;font-size:14px;line-height:14px;font-weight:700;color:#111;transform:scaleX(0.9564);">Tartakower,Saviely</span>
<span class="t" style="left:1489.40px;top:187.86px;font-size:14px;line-height:14px;font-weight:400;color:#111;transform:scaleX(0.9115);">2535</span>
<span class="t" style="left:1526.60px;top:187.86px;font-size:14px;line-height:14px;font-weight:400;color:#111;transform:scaleX(1.0922);">½-½</span>
<span class="t" style="left:1212.80px;top:208.56px;font-size:14px;line-height:14px;font-weight:400;color:#111;transform:scaleX(0.9892);">Match Rossolimo-Tartakower +1-1=8 Paris (5)  11.1948</span>
<span class="t" style="left:1368.00px;top:228.76px;font-size:14px;line-height:14px;font-weight:700;color:#111;transform:scaleX(0.8097);">B51</span>
<div style="left:972px;top:249.2px;width:803px;height:548px;background:#f2f2f2;"></div>
<div style="left:971px;top:319px;width:51px;height:19px;background:#0a0a0a;"></div>
<span class="t" style="left:976.40px;top:258.86px;font-size:14px;line-height:14px;font-weight:400;color:#111;transform:scaleX(0.9567);">1.e4  c5  2.Nf3  d6  3.Bb5+  Nd7  4.c3  a6  5.Ba4  e5  6.d4  b5  7.Bc2  Ngf6  8.0-0  Be7  9.Qe2  Bb7  10.dxe5  dxe5  11.Rd1  Qc7</span>
<span class="t" style="left:976.40px;top:279.40px;font-size:14px;line-height:14px;font-weight:400;color:#111;transform:scaleX(0.9659);">12.Bg5  c4  13.Nbd2  h6  14.Bxf6  Nxf6  15.Nf1  0-0  16.Ng3  g6  17.Nd2  h5  18.Ngf1  Rfd8  19.Ne3  Rd7  20.f3  h4  21.Ndf1  Rad8</span>
<span class="t" style="left:976.40px;top:299.94px;font-size:14px;line-height:14px;font-weight:400;color:#111;transform:scaleX(0.9479);">22.Rxd7  Rxd7  23.Rd1  Bc5  24.Kh1  Nh5  25.Rxd7  Qxd7  26.Ng4  Qe7  27.Qd2  Bc8  28.Nge3  Be6  29.b3  Ba7  30.b4  Qg5</span>
<span class="t" style="left:976.40px;top:320.48px;font-size:14px;line-height:14px;font-weight:400;color:#111;transform:scaleX(0.9599);"><span style="position:static;color:#fff">31.Nd1</span>  Nf4  32.Nde3  Bxe3  33.Nxe3  Nxg2  34.Nxc4  Nf4  35.Ne3  Bxa2  36.Nd5  Bc4  37.Nxf4  exf4  38.Qg2  Qe5  39.Qd2  h3</span>
<span class="t" style="left:976.40px;top:341.02px;font-size:14px;line-height:14px;font-weight:400;color:#111;transform:scaleX(0.9555);">40.Qd8+  Kh7  41.Qd4  Qg5  42.Qg1  Qh4  43.e5  Qh5  44.Be4  Qxe5  45.Qd4  Qg5  46.Bxg6+  Kg8  47.Bh7+  Kf8  48.Qg1  Qe5</span>
<span class="t" style="left:976.40px;top:361.56px;font-size:14px;line-height:14px;font-weight:400;color:#111;transform:scaleX(0.9475);">49.Be4  Be6  50.Qd4  Qxd4  51.cxd4  Ke7  52.Kg1  Kd6  53.Kf2  Bd7  54.Ke2  Kc7  55.Kd2  Kb6  56.Kc3  a5  57.bxa5+  Kxa5  58.Kb3</span>
<span class="t" style="left:976.40px;top:382.10px;font-size:14px;line-height:14px;font-weight:400;color:#111;transform:scaleX(0.9507);">b4  59.Kb2  Kb5  60.Bd3+  Kc6  61.Be4+  Kd6  62.Kb3  f5  63.Ba8  Bb5  64.Kxb4  Ba6  65.Kc3  Bc8</span>
<span class="t" style="left:976.40px;top:402.66px;font-size:14px;line-height:14px;font-weight:700;color:#111;transform:scaleX(1.0566);">½-½</span>
<div style="left:1775px;top:249.2px;width:15px;height:548px;background:#cdcdcd;"></div>
<div style="left:1775px;top:249.2px;width:15px;height:15px;background:#fdfdfd;"></div>
<div style="left:1775px;top:265.6px;width:15px;height:14.6px;background:#fdfdfd;"></div>
<div style="left:1775px;top:783px;width:15px;height:14.4px;background:#fdfdfd;"></div>
<svg width="15" height="548" style="left:1775px;top:249px"><path d="M3.6,9.6 h8 l-4,-4.6 z" fill="#8a8a8a"/><path d="M3.6,538.4 h8 l-4,4.6 z" fill="#8a8a8a"/></svg>
<div style="left:972px;top:797.2px;width:818px;height:2px;background:#111;"></div>
<div style="left:972px;top:799.2px;width:818px;height:64px;background:#fff;"></div>
<div style="left:1329px;top:807.6px;width:446px;height:1px;background:#f1f1f1;"></div>
<div style="left:1329px;top:854.8px;width:446px;height:1px;background:#f1f1f1;"></div>
<svg width="462" height="64" viewBox="1328 799 462 64" style="left:1328px;top:799px"><path d="M1328,831.5 H1775.4" stroke="#111" stroke-width="1.2"/><path d="M1334.4,827.6v8M1356.9,827.6v8M1379.5,827.6v8M1402.0,827.6v8M1424.5,827.6v8M1447.1,827.6v8M1469.6,827.6v8M1492.1,827.6v8M1514.6,827.6v8M1537.2,827.6v8M1559.7,827.6v8M1582.2,827.6v8M1604.8,827.6v8M1627.3,827.6v8M1649.8,827.6v8M1672.4,827.6v8M1694.9,827.6v8M1717.4,827.6v8M1739.9,827.6v8" stroke="#111" stroke-width="1.1"/><rect x="1780" y="808" width="5.4" height="47" fill="#fffff0" stroke="#111" stroke-width="1"/><path d="M1780,817.4h5.4M1780,826.8h5.4M1780,836.2h5.4M1780,845.6h5.4" stroke="#222" stroke-width=".9"/><rect x="1780.5" y="845.6" width="4.4" height="9" fill="#38dcf0"/></svg>
<span class="t" style="left:1330.20px;top:854.79px;font-size:8px;line-height:8px;font-weight:400;color:#8a8a8a;transform:scaleX(0.9432);">32</span>
<span class="t" style="left:1352.73px;top:854.79px;font-size:8px;line-height:8px;font-weight:400;color:#8a8a8a;transform:scaleX(0.9432);">34</span>
<span class="t" style="left:1375.26px;top:854.79px;font-size:8px;line-height:8px;font-weight:400;color:#8a8a8a;transform:scaleX(0.9432);">36</span>
<span class="t" style="left:1397.79px;top:854.79px;font-size:8px;line-height:8px;font-weight:400;color:#8a8a8a;transform:scaleX(0.9432);">38</span>
<span class="t" style="left:1420.32px;top:854.79px;font-size:8px;line-height:8px;font-weight:400;color:#8a8a8a;transform:scaleX(0.9432);">40</span>
<span class="t" style="left:1442.85px;top:854.79px;font-size:8px;line-height:8px;font-weight:400;color:#8a8a8a;transform:scaleX(0.9432);">42</span>
<span class="t" style="left:1465.38px;top:854.79px;font-size:8px;line-height:8px;font-weight:400;color:#8a8a8a;transform:scaleX(0.9432);">44</span>
<span class="t" style="left:1487.91px;top:854.79px;font-size:8px;line-height:8px;font-weight:400;color:#8a8a8a;transform:scaleX(0.9432);">46</span>
<span class="t" style="left:1510.44px;top:854.79px;font-size:8px;line-height:8px;font-weight:400;color:#8a8a8a;transform:scaleX(0.9432);">48</span>
<span class="t" style="left:1532.97px;top:854.79px;font-size:8px;line-height:8px;font-weight:400;color:#8a8a8a;transform:scaleX(0.9432);">50</span>
<span class="t" style="left:1555.50px;top:854.79px;font-size:8px;line-height:8px;font-weight:400;color:#8a8a8a;transform:scaleX(0.9432);">52</span>
<span class="t" style="left:1578.03px;top:854.79px;font-size:8px;line-height:8px;font-weight:400;color:#8a8a8a;transform:scaleX(0.9432);">54</span>
<span class="t" style="left:1600.56px;top:854.79px;font-size:8px;line-height:8px;font-weight:400;color:#8a8a8a;transform:scaleX(0.9432);">56</span>
<span class="t" style="left:1623.09px;top:854.79px;font-size:8px;line-height:8px;font-weight:400;color:#8a8a8a;transform:scaleX(0.9432);">58</span>
<span class="t" style="left:1645.62px;top:854.79px;font-size:8px;line-height:8px;font-weight:400;color:#8a8a8a;transform:scaleX(0.9432);">60</span>
<span class="t" style="left:1668.15px;top:854.79px;font-size:8px;line-height:8px;font-weight:400;color:#8a8a8a;transform:scaleX(0.9432);">62</span>
<span class="t" style="left:1690.68px;top:854.79px;font-size:8px;line-height:8px;font-weight:400;color:#8a8a8a;transform:scaleX(0.9432);">64</span>
<span class="t" style="left:1713.21px;top:854.79px;font-size:8px;line-height:8px;font-weight:400;color:#8a8a8a;transform:scaleX(0.9432);">66</span>
<span class="t" style="left:1735.74px;top:854.79px;font-size:8px;line-height:8px;font-weight:400;color:#8a8a8a;transform:scaleX(0.9432);">68</span>
<div style="left:972px;top:863.2px;width:818px;height:1px;background:#d4d4d4;"></div>
<div style="left:972px;top:864.2px;width:818px;height:27px;background:#fdfdfd;"></div>
<div style="left:972px;top:890.4px;width:818px;height:2.6px;background:#e4e4e4;"></div>
<svg width="340" height="28" viewBox="1330 862 340 28" style="left:1330px;top:862px"><path d="M1340.6,872h9M1345.1,868v8M1340.6,878.6h9M1340.6,881.6h9" stroke="#111" stroke-width="1.5" fill="none"/><path d="M1365,873.6h9M1365,878h9" stroke="#111" stroke-width="1.5" fill="none"/><path d="M1394.6,876.4c-1.2,-2.6,-5,-2.6,-5,0s3.8,2.600,5,0c1.200,-2.600,5,-2.600,5,0s-3.8,2.600,-5,0z" stroke="#111" stroke-width="1.4" fill="none"/><path d="M1420,872c-1,-2.200,-4.400,-2.200,-4.400,0s3.400,2.200,4.400,0c1,-2.200,4.400,-2.200,4.400,0s-3.400,2.200,-4.400,0zM1415.200,878h9.600M1415.200,881.400h9.600" stroke="#111" stroke-width="1.3" fill="none"/><path d="M1440,869.600h9M1440,872.800h9M1440,878.600h9M1444.500,874.600v8" stroke="#111" stroke-width="1.5" fill="none"/><path d="M1465,871.200h9M1465,878h9M1469.500,874v8" stroke="#111" stroke-width="1.5" fill="none"/><path d="M1488.400,876.600h5M1495.400,876.600h7M1498.900,873.200v7" stroke="#111" stroke-width="1.5" fill="none"/><path d="M1514.400,873.200h10.600M1522,870.400l3,2.800l-3,2.800M1525.600,879.600h-10.600M1518,876.800l-3,2.800l3,2.800" stroke="#111" stroke-width="1.5" fill="none"/><g transform="rotate(-28 1545.600 876)"><rect x="1538" y="872.600" width="9" height="6.400" rx="1.200" fill="#7a8fd8" stroke="#5a6cb0" stroke-width=".6"/><rect x="1547" y="872.600" width="6.400" height="6.400" rx="1.200" fill="#e04050" stroke="#b03040" stroke-width=".6"/></g><polygon points="1570.8,869.0 1572.8,873.7 1577.8,874.1 1574.0,877.4 1575.1,882.4 1570.8,879.7 1566.5,882.4 1567.6,877.4 1563.8,874.1 1568.8,873.7" fill="#f4f4f4" stroke="#bdbdbd" stroke-width=".9"/><polygon points="1595.4,869.0 1597.4,873.7 1602.4,874.1 1598.6,877.4 1599.7,882.4 1595.4,879.7 1591.1,882.4 1592.2,877.4 1588.4,874.1 1593.4,873.7" fill="#f0f0f0" stroke="#b4b4b4" stroke-width=".9"/><path d="M1598,880.600h5M1600.500,878.200v5" stroke="#888" stroke-width="1.400"/><path d="M1614.800,869.800c4,1 8,5 11,12 M1627,869.800c-4,1 -8,5 -11,12" stroke="#6a6a6a" stroke-width="2.200" fill="none"/><path d="M1614.800,869.800l4,-0.600M1627,869.800l-4,-0.600" stroke="#6a6a6a" stroke-width="1.600"/><rect x="1643.600" y="868.400" width="4.600" height="9" rx="2.300" fill="#777"/><path d="M1642,875c0,5 7.800,5 7.800,0M1645.900,879v3M1643.600,882.400h4.600" stroke="#666" stroke-width="1" fill="none"/><path d="M1643.600,871h4.600M1643.600,873h4.600M1643.600,875h4.600" stroke="#ccc" stroke-width=".6"/></svg>
<svg width="80" height="3" style="left:1343px;top:887.6px"><path d="M0,1.500h74" stroke="#c4c4c4" stroke-width="1.600" stroke-dasharray="1.600 2.400"/></svg>
<div style="left:971px;top:893px;width:819px;height:16px;background:linear-gradient(#ccd6e2,#bac6d4 60%,#b4c0cf);"></div>
<span class="t" style="left:975.60px;top:896.13px;font-size:11px;line-height:11px;font-weight:400;color:#111;transform:scaleX(0.9435);">Engine: Fat Fritz 2</span>
<svg width="32" height="12" style="left:1758px;top:895px"><path d="M2.6,4 h9.6 l-4.8,5 z" fill="#111"/><path d="M18.6,1.6 l7.6,8 M26.2,1.6 l-7.6,8" stroke="#111" stroke-width="1.6"/></svg>
<div style="left:972px;top:909px;width:818px;height:149px;background:#f0f0f0;"></div>
<div style="left:976px;top:915.6px;width:69px;height:20.4px;background:#fff;box-shadow:1px 1px 0 #bdbdbd;"></div>
<span class="t" style="left:986.60px;top:919.51px;font-size:13.5px;line-height:13.5px;font-weight:400;color:#111;transform:scaleX(0.9305);">Stopped</span>
<div style="left:1053.4px;top:916.2px;width:28.0px;height:18.6px;background:#e1e1e1;border:1px solid #adadad;box-sizing:border-box;"></div>
<div style="left:1091.2px;top:916.2px;width:27.200000000000045px;height:18.6px;background:#e1e1e1;border:1px solid #adadad;box-sizing:border-box;"></div>
<div style="left:1125.2px;top:916.2px;width:27.59999999999991px;height:18.6px;background:#e1e1e1;border:1px solid #adadad;box-sizing:border-box;"></div>
<div style="left:1162.8px;top:916.2px;width:53.799999999999955px;height:18.6px;background:#e1e1e1;border:1px solid #adadad;box-sizing:border-box;"></div>
<span class="t" style="left:1169.80px;top:919.95px;font-size:13px;line-height:13px;font-weight:400;color:#111;transform:scaleX(0.8527);">8 CPUs</span>
<div style="left:1236.4px;top:915.6px;width:20px;height:20.4px;background:#e9e9e9;border:1px solid #e0e0e0;box-sizing:border-box;"></div>
<svg width="220" height="24" viewBox="1050 914 220 24" style="left:1050px;top:913.4px"><defs><radialGradient id="pb" cx=".4" cy=".35" r=".75"><stop offset="0" stop-color="#5a7cff"/><stop offset="1" stop-color="#1228c8"/></radialGradient></defs><circle cx="1067.400" cy="926" r="7" fill="url(#pb)" stroke="#8fa0e0" stroke-width=".8"/><path d="M1065,922.200l6,3.800l-6,3.800z" fill="#fff"/><circle cx="1102.600" cy="923.600" r="4.600" fill="#e8f8c8" stroke="#5aa028" stroke-width="1.300"/><path d="M1100.400,923.600h4.400M1102.600,921.400v4.400" stroke="#3a8018" stroke-width="1"/><path d="M1105.800,927l5,5" stroke="#8a7a6a" stroke-width="2.200" stroke-linecap="round"/><circle cx="1136.600" cy="923.600" r="4.600" fill="#e8f070" stroke="#5aa028" stroke-width="1.300"/><path d="M1134.400,923.600h4.400" stroke="#3a8018" stroke-width="1"/><path d="M1139.800,927l5,5" stroke="#8a7a6a" stroke-width="2.200" stroke-linecap="round"/><rect x="1240" y="924.6" width="12.4" height="8.6" rx=".6" fill="#0c0c0c"/><path d="M1243,924.6v-3a3.200,3.200 0 0 1 6.400,-0.800" stroke="#0c0c0c" stroke-width="2.200" fill="none"/><rect x="1245.400" y="927" width="1.800" height="3.400" fill="#eee"/></svg>
<div style="left:976px;top:941px;width:22px;height:21px;background:#e9e9e9;box-shadow:1px 1px 0 #c4c4c4;"></div>
<svg width="16" height="16" style="left:979px;top:943.4px"><defs><radialGradient id="gb" cx=".4" cy=".35" r=".7"><stop offset="0" stop-color="#c4c4c4"/><stop offset="1" stop-color="#6a6a6a"/></radialGradient></defs><circle cx="8" cy="8" r="6.800" fill="url(#gb)"/></svg>
<div style="left:1004.2px;top:941.2px;width:87.0px;height:20.2px;background:#fff;box-shadow:1px 1px 0 #c8c8c8;"></div>
<div style="left:1098.8px;top:941.2px;width:76.20000000000005px;height:20.2px;background:#fff;box-shadow:1px 1px 0 #c8c8c8;"></div>
<div style="left:1182.6px;top:941.2px;width:109.60000000000014px;height:20.2px;background:#fff;box-shadow:1px 1px 0 #c8c8c8;"></div>
<div style="left:1300.6px;top:941.2px;width:70.80000000000018px;height:20.2px;background:#fff;box-shadow:1px 1px 0 #c8c8c8;"></div>
<div style="left:1379.8px;top:941.2px;width:48.799999999999955px;height:20.2px;background:#fff;box-shadow:1px 1px 0 #c8c8c8;"></div>
<div style="left:1711.6px;top:916.2px;width:45.4px;height:45px;background:#e1e1e1;border:1px solid #adadad;box-sizing:border-box;"></div>
<svg width="34" height="24" viewBox="0 0 34 24" style="left:1717.400px;top:926.600px"><defs><linearGradient id="cg" x1="0" y1="0" x2="0" y2="1"><stop offset="0" stop-color="#cfe2f2"/><stop offset=".6" stop-color="#fff"/></linearGradient></defs><path d="M8,20.400c-4.400,0 -6.400,-3 -6,-5.600c.4,-2.800 2.600,-4.400 5,-4.400c.6,-4.400 4,-7.200 8.400,-7.200c4,0 7,2.400 8,6c4,-.4 7.400,2 7.400,5.600c0,3.200 -2.600,5.600 -6.400,5.600c-2,1.800 -5,2.200 -7.400,1c-2.600,1.400 -6,1.200 -9,-1z" fill="url(#cg)" stroke="#5c9ad0" stroke-width="1"/></svg>
<div style="left:975.6px;top:971.2px;width:783px;height:82.4px;background:#f0f0f0;box-shadow:inset 1px 1px 0 #e2e2e2, 1px 1px 0 #fff;"></div>
<div style="left:971px;top:1053.6px;width:788px;height:1px;background:#bdbdbd;"></div>
<div style="left:1762.2px;top:972.2px;width:21.8px;height:71.8px;background:#e1e1e1;border:1px solid #adadad;box-sizing:border-box;"></div>
<svg width="20" height="56" style="left:1763.600px;top:980px"><path d="M2.600,1 h8.600 l6.400,25.600 l-6.600,25 h-8.400 l5.600,-25 z" fill="#0f6fd0"/></svg>
<div style="left:0px;top:1058px;width:1790px;height:22px;background:#f0f0f0;"></div>
<div style="left:972px;top:1058px;width:818px;height:1.4px;background:#dcdcdc;"></div>
<span class="t" style="left:8.40px;top:1065.53px;font-size:11px;line-height:11px;font-weight:400;color:#3a3e50;transform:scaleX(0.9555);">Done - Replay</span>
<div style="left:1662.2px;top:1064px;width:125px;height:14px;background:#050505;"></div>
<span class="t" style="left:1674.40px;top:1065.64px;font-size:12px;line-height:12px;font-weight:700;color:#fff;transform:scaleX(1.0053);font-family:'Liberation Serif',serif;">0:00:00</span>
<span class="t" style="left:1736.80px;top:1065.64px;font-size:12px;line-height:12px;font-weight:700;color:#fff;transform:scaleX(1.0053);font-family:'Liberation Serif',serif;">0:00:00</span>
<div style="left:974.4px;top:421.6px;width:354.2px;height:471.4px;background:#f0f0f0;border:1px solid #3b7bd6;box-sizing:border-box;box-shadow:0 0 0 0.500px #6aa0e6;"></div>
<div style="left:975.4px;top:422.6px;width:352.2px;height:23.4px;background:#2b579a;"></div>
<div style="left:975.4px;top:445.6px;width:352.2px;height:1px;background:#fcfcfc;"></div>
<span class="t" style="left:981.40px;top:429.73px;font-size:11px;line-height:11px;font-weight:400;color:#fff;transform:scaleX(0.9264);">Full Tree Replay</span>
<svg width="10" height="10" style="left:1306.400px;top:427.600px"><path d="M1.400,1.400l7,7M8.400,1.400l-7,7" stroke="#fff" stroke-width="1.700"/></svg>
<div style="left:989.4px;top:460px;width:96.6px;height:32.2px;background:#e1e1e1;border:1px solid #adadad;box-sizing:border-box;"></div>
<div style="left:1099px;top:460px;width:97px;height:32.2px;background:#e5f1fb;border:1.4px solid #0078d7;box-sizing:border-box;"></div>
<div style="left:1209.2px;top:460px;width:96.8px;height:32.2px;background:#e1e1e1;border:1px solid #adadad;box-sizing:border-box;"></div>
<svg width="330" height="34" viewBox="985 459 330 34" style="left:985px;top:459px"><defs><linearGradient id="ga" x1="0" y1="0" x2="0" y2="1"><stop offset="0" stop-color="#7ad85a"/><stop offset=".5" stop-color="#3cb82c"/><stop offset="1" stop-color="#2a9a22"/></linearGradient><radialGradient id="pz" cx=".45" cy=".3" r=".8"><stop offset="0" stop-color="#7a8cff"/><stop offset=".5" stop-color="#2a3ce0"/><stop offset="1" stop-color="#1a24b8"/></radialGradient></defs><path d="M1026.400,475.600l10,-7v4.200h12.400v5.600h-12.400v4.200z" fill="url(#ga)" stroke="#2c9a24" stroke-width=".6"/><path d="M1268.800,475.600l-10,-7v4.200h-12.400v5.600h12.400v4.200z" fill="url(#ga)" stroke="#2c9a24" stroke-width=".6"/><circle cx="1147.600" cy="475.400" r="10.200" fill="url(#pz)" stroke="#9aa6f0" stroke-width=".8"/><rect x="1143.200" y="470.800" width="3" height="9.400" rx=".8" fill="#fff"/><rect x="1149" y="470.800" width="3" height="9.400" rx=".8" fill="#fff"/></svg>
<div style="left:1046.3px;top:531.3px;width:203.4px;height:57.5px;border:1px solid #dcdcdc;box-sizing:border-box;"></div>
<div style="left:1051.5px;top:524px;width:35px;height:14px;background:#f0f0f0;"></div>
<span class="t" style="left:1054.60px;top:526.53px;font-size:11px;line-height:11px;font-weight:400;color:#111;transform:scaleX(0.9179);">Speed</span>
<span class="t" style="left:1144.80px;top:551.33px;font-size:11px;line-height:11px;font-weight:400;color:#111;transform:scaleX(0.9143);">5</span>
<div style="left:1077.8px;top:569.4px;width:142.6px;height:3.6px;background:#e7eaea;border:1px solid #d6d6d6;box-sizing:border-box;"></div>
<svg width="10" height="14" style="left:1137px;top:565.400px"><path d="M1.400,.8h6.200v7.400l-3.100,3.400l-3.100,-3.400z" fill="#0078d7"/></svg>
<div style="left:1080.6px;top:579.4px;width:1px;height:3.6px;background:#c4c4c4;"></div>
<div style="left:1216.8px;top:579.4px;width:1px;height:3.6px;background:#c4c4c4;"></div>
<span class="t" style="left:1046.40px;top:627.33px;font-size:11px;line-height:11px;font-weight:400;color:#111;transform:scaleX(0.9464);">N Repeats</span>
<div style="left:1189.4px;top:623px;width:58.6px;height:21.6px;background:#fff;border:1px solid #b4b4b4;box-sizing:border-box;box-shadow:inset 1px 1px 0 #8a8a8a;"></div>
<div style="left:1232.6px;top:624px;width:14.4px;height:19.6px;background:#f0f0f0;"></div>
<div style="left:1233.6px;top:625px;width:12.6px;height:8.6px;background:#f6f6f6;border:1px solid #c8c8c8;box-sizing:border-box;"></div>
<div style="left:1233.6px;top:634.4px;width:12.6px;height:8.6px;background:#f6f6f6;border:1px solid #c8c8c8;box-sizing:border-box;"></div>
<svg width="13" height="20" style="left:1233.600px;top:624.600px"><path d="M3.800,6h5l-2.500,-3z M3.800,12.600h5l-2.500,3z" fill="#111"/></svg>
<span class="t" style="left:1194.40px;top:627.13px;font-size:11px;line-height:11px;font-weight:400;color:#111;transform:scaleX(0.8816);">3</span>
<div style="left:1047.2px;top:669px;width:202.6px;height:24.4px;background:#e1e1e1;border:1px solid #adadad;box-sizing:border-box;"></div>
<svg width="22" height="22" viewBox="0 0 22 22" style="left:1081.400px;top:670px"><rect x="1.600" y="1.600" width="18.400" height="17.600" rx="3" fill="#f4f4f4" stroke="#111" stroke-width="1.500"/><circle cx="6" cy="5.800" r="1.400"/><circle cx="15.600" cy="5.800" r="1.400"/><circle cx="10.800" cy="10.400" r="1.400"/><circle cx="6" cy="15" r="1.400"/><circle cx="15.600" cy="15" r="1.400"/></svg>
<span class="t" style="left:1112.60px;top:678.33px;font-size:11px;line-height:11px;font-weight:400;color:#111;transform:scaleX(0.9623);">Fresh Variation</span>
<div style="left:1073.8px;top:707.2px;width:12.4px;height:12.2px;background:#fff;border:1px solid #333;box-sizing:border-box;"></div>
<span class="t" style="left:1089.20px;top:708.13px;font-size:11px;line-height:11px;font-weight:400;color:#111;transform:scaleX(1.0124);">Lock on variation</span>
<div style="left:1073.8px;top:732.6px;width:12.4px;height:12.2px;background:#fff;border:1px solid #333;box-sizing:border-box;"></div>
<span class="t" style="left:1089.20px;top:733.33px;font-size:11px;line-height:11px;font-weight:400;color:#111;transform:scaleX(1.0404);">Mainline only</span>
<div style="left:1046.3px;top:776.2px;width:203.5px;height:27.4px;background:#e6e6e6;border:1px solid #bcbcbc;box-sizing:border-box;"></div>
<div style="left:1046.3px;top:776.6px;width:2.2px;height:26.6px;background:#06b025;"></div>
<span class="t" style="left:1088.80px;top:812.46px;font-size:9.5px;line-height:9.5px;font-weight:400;color:#111;transform:scaleX(0.9572);">Covered Positions = 1 (  1%)</span>
<div style="left:1097.2px;top:856.2px;width:100.6px;height:20.2px;background:#e1e1e1;border:1px solid #adadad;box-sizing:border-box;"></div>
<span class="t" style="left:1133.80px;top:861.33px;font-size:11px;line-height:11px;font-weight:400;color:#111;transform:scaleX(0.9666);"><u>C</u>lose</span>
</body></html>
